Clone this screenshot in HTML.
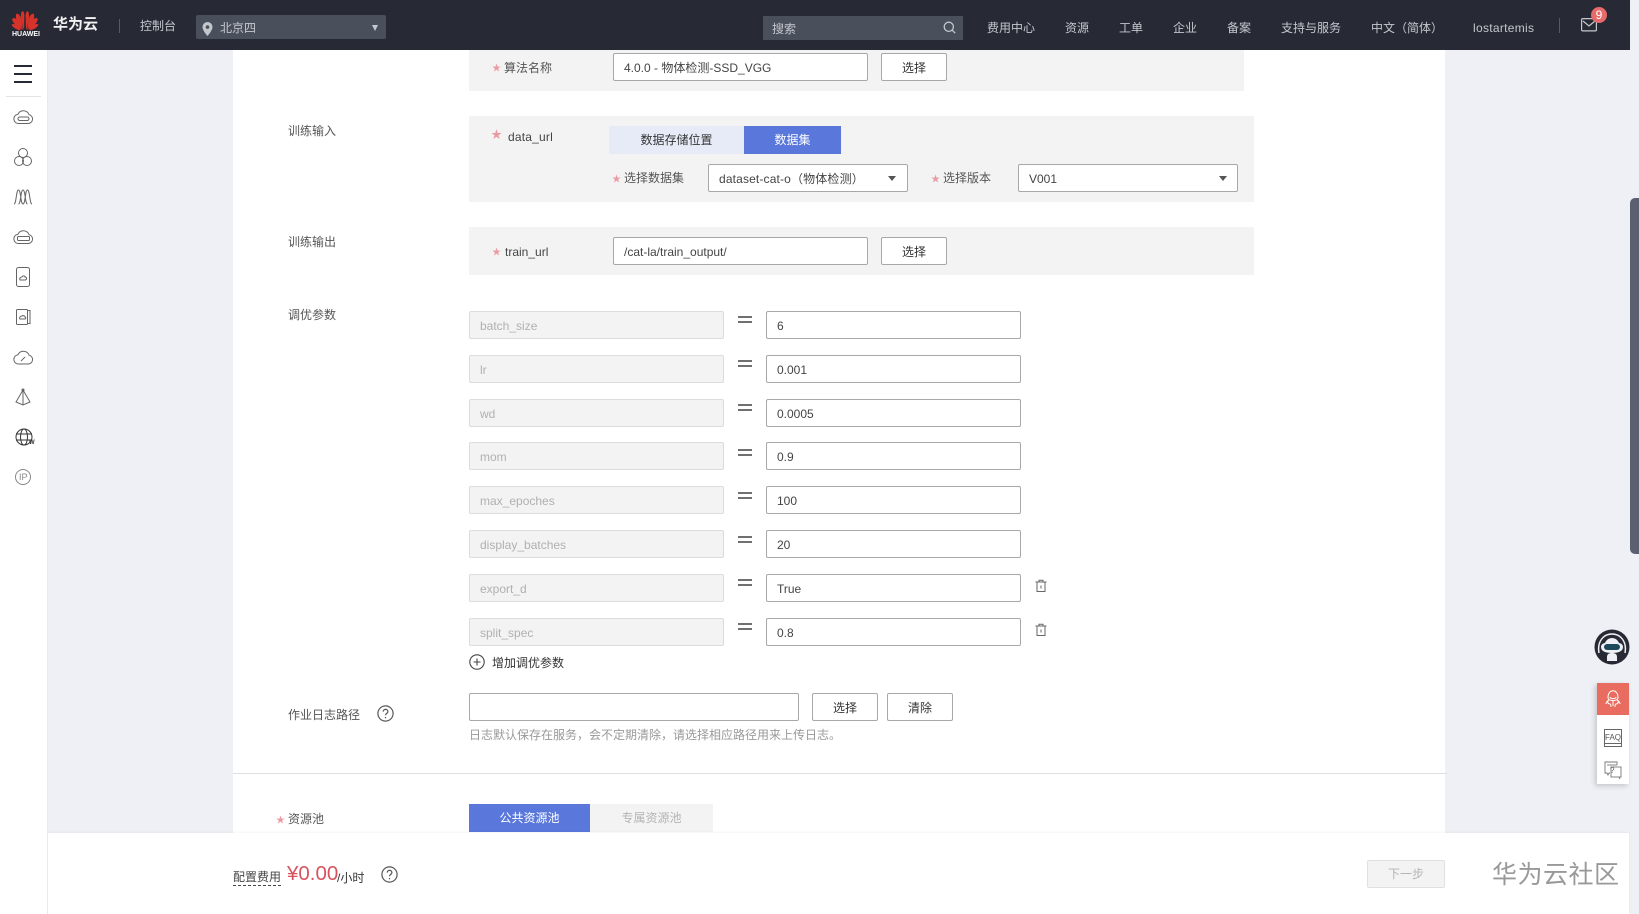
<!DOCTYPE html>
<html lang="zh-CN"><head><meta charset="utf-8"><title>华为云</title>
<style>
*{box-sizing:border-box}
html,body{margin:0;padding:0;width:1639px;height:914px;overflow:hidden;background:#eef0f5;font:12px/16px "Liberation Sans","Noto Sans CJK SC",sans-serif;color:#333}
.a{position:absolute}
.t{position:absolute;white-space:nowrap;line-height:16px}
.nav{color:#c4c7ce;top:20px}
.panel{position:absolute;background:#f3f3f3}
.inp{position:absolute;background:#fff;border:1px solid #a8a8a8;border-radius:2px;height:28px;padding:0 10px;line-height:29px;color:#444;white-space:nowrap}
.key{position:absolute;background:#f3f3f3;border:1px solid #dcdcdc;border-radius:2px;height:28px;padding:0 10px;line-height:29px;color:#b0b0b0;left:469px;width:255px}
.btn{position:absolute;background:#fff;border:1px solid #a8a8a8;border-radius:2px;height:28px;line-height:28px;text-align:center;color:#333}
.star{color:#ea9aa3;font-size:9px}
.lbl{color:#555}
.eq{position:absolute;left:738px;width:14px;height:7px;border-top:2px solid #707070;border-bottom:2px solid #707070}
.arrow{position:absolute;width:0;height:0;border-left:4px solid transparent;border-right:4px solid transparent;border-top:5px solid #555}
svg{position:absolute;overflow:visible}
</style></head><body>

<!-- content -->
<div class="a" style="left:233px;top:50px;width:1212px;height:783px;background:#fff"></div>

<!-- algorithm panel -->
<div class="panel" style="left:469px;top:50px;width:775px;height:41px"></div>
<div class="t" style="left:492px;top:59px"><span class="star">★</span></div>
<div class="t lbl" style="left:504px;top:60px">算法名称</div>
<div class="inp" style="left:613px;top:53px;width:255px">4.0.0 - 物体检测-SSD_VGG</div>
<div class="btn" style="left:881px;top:53px;width:66px">选择</div>

<!-- train input -->
<div class="t lbl" style="left:288px;top:123px">训练输入</div>
<div class="panel" style="left:469px;top:116px;width:785px;height:86px"></div>
<div class="t" style="left:491px;top:126px"><span class="star" style="font-size:11px">★</span></div>
<div class="t" style="left:508px;top:129px;color:#444;letter-spacing:.2px">data_url</div>
<div class="a" style="left:609px;top:126px;width:135px;height:28px;background:#e6ebf7;text-align:center;line-height:29px;color:#333">数据存储位置</div>
<div class="a" style="left:744px;top:126px;width:97px;height:28px;background:#5a78dc;text-align:center;line-height:29px;color:#fff">数据集</div>
<div class="t" style="left:612px;top:170px"><span class="star">★</span></div>
<div class="t lbl" style="left:624px;top:170px">选择数据集</div>
<div class="inp" style="left:708px;top:164px;width:200px;height:28px;letter-spacing:.15px">dataset-cat-o（物体检测）</div>
<div class="arrow" style="left:888px;top:176px"></div>
<div class="t" style="left:931px;top:170px"><span class="star">★</span></div>
<div class="t lbl" style="left:943px;top:170px">选择版本</div>
<div class="inp" style="left:1018px;top:164px;width:220px;height:28px">V001</div>
<div class="arrow" style="left:1219px;top:176px"></div>

<!-- train output -->
<div class="t lbl" style="left:288px;top:234px">训练输出</div>
<div class="panel" style="left:469px;top:227px;width:785px;height:48px"></div>
<div class="t" style="left:492px;top:243px"><span class="star">★</span></div>
<div class="t" style="left:505px;top:244px;color:#444">train_url</div>
<div class="inp" style="left:613px;top:237px;width:255px">/cat-la/train_output/</div>
<div class="btn" style="left:881px;top:237px;width:66px">选择</div>

<!-- tuning -->
<div class="t lbl" style="left:288px;top:307px">调优参数</div>

<div class="key" style="top:311px">batch_size</div><div class="eq" style="top:316px"></div><div class="inp" style="left:766px;top:311px;width:255px">6</div>
<div class="key" style="top:355px">lr</div><div class="eq" style="top:360px"></div><div class="inp" style="left:766px;top:355px;width:255px">0.001</div>
<div class="key" style="top:399px">wd</div><div class="eq" style="top:404px"></div><div class="inp" style="left:766px;top:399px;width:255px">0.0005</div>
<div class="key" style="top:442px">mom</div><div class="eq" style="top:449px"></div><div class="inp" style="left:766px;top:442px;width:255px">0.9</div>
<div class="key" style="top:486px">max_epoches</div><div class="eq" style="top:492px"></div><div class="inp" style="left:766px;top:486px;width:255px">100</div>
<div class="key" style="top:530px">display_batches</div><div class="eq" style="top:536px"></div><div class="inp" style="left:766px;top:530px;width:255px">20</div>
<div class="key" style="top:574px">export_d</div><div class="eq" style="top:579px"></div><div class="inp" style="left:766px;top:574px;width:255px">True</div>
<div class="key" style="top:618px">split_spec</div><div class="eq" style="top:623px"></div><div class="inp" style="left:766px;top:618px;width:255px">0.8</div>

<svg style="left:1034px;top:579px" width="14" height="14" viewBox="0 0 14 14" fill="none" stroke="#666" stroke-width="1"><path d="M1.500 3h11M5 3V1.200h4V3M3 3v9.500h8V3M7 6.500v3"/></svg>
<svg style="left:1034px;top:623px" width="14" height="14" viewBox="0 0 14 14" fill="none" stroke="#666" stroke-width="1"><path d="M1.500 3h11M5 3V1.200h4V3M3 3v9.500h8V3M7 6.500v3"/></svg>

<svg style="left:469px;top:654px" width="16" height="16" viewBox="0 0 16 16" fill="none" stroke="#444" stroke-width="1.100"><circle cx="8" cy="8" r="7.200"/><path d="M8 4.500v7M4.500 8h7"/></svg>
<div class="t" style="left:492px;top:655px;color:#333">增加调优参数</div>

<!-- log -->
<div class="t lbl" style="left:288px;top:707px">作业日志路径</div>
<svg style="left:377px;top:705px" width="17" height="17" viewBox="0 0 17 17" fill="none" stroke="#555" stroke-width="1.200"><circle cx="8.500" cy="8.500" r="7.600"/><path d="M6.200 6.600c0-3 4.700-3 4.700 0 0 1.800-2.400 1.800-2.400 3.700M8.500 12v1.200"/></svg>
<div class="inp" style="left:469px;top:693px;width:330px"></div>
<div class="btn" style="left:812px;top:693px;width:66px">选择</div>
<div class="btn" style="left:887px;top:693px;width:66px">清除</div>
<div class="t" style="left:469px;top:727px;color:#999">日志默认保存在服务，会不定期清除，请选择相应路径用来上传日志。</div>

<div class="a" style="left:233px;top:773px;width:1214px;height:1px;background:#dedfe2"></div>

<!-- resource -->
<div class="t" style="left:276px;top:811px"><span class="star">★</span></div>
<div class="t lbl" style="left:288px;top:811px">资源池</div>
<div class="a" style="left:469px;top:804px;width:121px;height:28px;background:#5a78dc;color:#fff;text-align:center;line-height:29px">公共资源池</div>
<div class="a" style="left:590px;top:804px;width:123px;height:28px;background:#f3f3f3;color:#b4b4b4;text-align:center;line-height:29px">专属资源池</div>

<!-- bottom bar -->
<div class="a" style="left:48px;top:833px;width:1581px;height:81px;background:#fff;box-shadow:0 -1px 2px rgba(0,0,0,.04)"></div>
<div class="t" style="left:233px;top:869px;color:#444;border-bottom:1px dashed #444;height:17px">配置费用</div>
<div class="t" style="left:287px;top:862px;font-size:20.500px;line-height:24px;color:#d7545e">¥0.00</div>
<div class="t" style="left:337px;top:870px;color:#333">/小时</div>
<svg style="left:381px;top:866px" width="17" height="17" viewBox="0 0 17 17" fill="none" stroke="#555" stroke-width="1.200"><circle cx="8.500" cy="8.500" r="7.600"/><path d="M6.200 6.600c0-3 4.700-3 4.700 0 0 1.800-2.400 1.800-2.400 3.700M8.500 12v1.200"/></svg>
<div class="a" style="left:1367px;top:860px;width:78px;height:28px;background:#f3f3f3;border:1px solid #e0e0e0;border-radius:2px;color:#b4b4b4;text-align:center;line-height:27px">下一步</div>
<div class="t" style="left:1492px;top:859px;font-size:25px;line-height:32px;color:#999;letter-spacing:.5px">华为云社区</div>

<!-- header -->
<div class="a" style="left:0;top:0;width:1630px;height:50px;background:#272a35"></div>
<svg style="left:11px;top:9px" width="28" height="22" viewBox="0 0 28 22">
<g fill="#d8332a"><path d="M13 21C11 15 9 8 10.500 3 12 1 13 3 13.400 6z"/><path d="M15 21c2-6 4-13 2.500-18C16 1 15 3 14.600 6z"/><path d="M12 21C8 16 4 11 5 5c2-1 4 1 5 4z"/><path d="M16 21c4-5 8-10 7-16-2-1-4 1-5 4z"/><path d="M11 21C7 18 2 15 1 10c2-2 5 0 6 2z"/><path d="M17 21c4-3 9-6 10-11-2-2-5 0-6 2z"/><path d="M10 21.500C6 21 2 19 .5 15.500 3 14 6 16 8 18z"/><path d="M18 21.500c4-.5 8-2.500 9.500-6-2.500-1.500-5.500.5-7.500 2.500z"/></g></svg>
<div class="t" style="left:12px;top:30px;font-size:7px;line-height:10px;color:#fff;font-weight:bold">HUAWEI</div>
<div class="t" style="left:53px;top:16px;font-size:15px;line-height:18px;color:#f2f2f2;font-weight:bold">华为云</div>
<div class="a" style="left:119px;top:19px;width:1px;height:14px;background:#555a66"></div>
<div class="t" style="left:140px;top:18px;color:#c4c7ce">控制台</div>
<div class="a" style="left:196px;top:15px;width:190px;height:24px;background:#4a4f5c;border-radius:2px"></div>
<svg style="left:202px;top:22px" width="11" height="14" viewBox="0 0 11 14"><path fill="#c4c7ce" fill-rule="evenodd" d="M5.500 0a5 5 0 0 1 5 5c0 3.500-5 9-5 9s-5-5.500-5-9a5 5 0 0 1 5-5zm0 3.300a1.800 1.800 0 1 0 0 3.600 1.800 1.800 0 0 0 0-3.600z"/></svg>
<div class="t" style="left:220px;top:20px;color:#c4c7ce">北京四</div>
<div class="a" style="left:372px;top:25px;width:0;height:0;border-left:3.500px solid transparent;border-right:3.500px solid transparent;border-top:6px solid #c4c7ce"></div>

<div class="a" style="left:763px;top:16px;width:200px;height:24px;background:#4a4f5c;border-radius:1px"></div>
<div class="t" style="left:772px;top:21px;color:#c4c7ce">搜索</div>
<svg style="left:943px;top:21px" width="13" height="13" viewBox="0 0 13 13" fill="none" stroke="#c4c7ce" stroke-width="1.300"><circle cx="5.800" cy="5.800" r="4.600"/><path d="M9.200 9.200l3 3"/></svg>
<div class="t nav" style="left:987px">费用中心</div>
<div class="t nav" style="left:1065px">资源</div>
<div class="t nav" style="left:1119px">工单</div>
<div class="t nav" style="left:1173px">企业</div>
<div class="t nav" style="left:1227px">备案</div>
<div class="t nav" style="left:1281px">支持与服务</div>
<div class="t nav" style="left:1371px">中文（简体）</div>
<div class="t nav" style="left:1473px;letter-spacing:.3px">lostartemis</div>
<div class="a" style="left:1559px;top:18px;width:1px;height:15px;background:#555a66"></div>
<svg style="left:1581px;top:18px" width="16" height="14" viewBox="0 0 16 14" fill="none" stroke="#c4c7ce" stroke-width="1.200"><rect x=".6" y=".6" width="14.800" height="12.300" rx="1"/><path d="M2 3l6 5 6-5"/></svg>
<div class="a" style="left:1591px;top:7px;width:16px;height:16px;border-radius:50%;background:#e86a6a;color:#fff;text-align:center;line-height:16px;font-size:12px">9</div>

<!-- sidebar -->
<div class="a" style="left:0;top:50px;width:48px;height:864px;background:#fff;border-right:1px solid #e8e9ec"></div>
<div class="a" style="left:14px;top:65px;width:18px;height:2px;background:#272a35"></div>
<div class="a" style="left:14px;top:73px;width:18px;height:2px;background:#272a35"></div>
<div class="a" style="left:14px;top:81px;width:18px;height:2px;background:#272a35"></div>
<div class="a" style="left:6px;top:96px;width:35px;height:1px;background:#e3e4e7"></div>

<svg style="left:0;top:0" width="48" height="500" fill="none" stroke="#666" stroke-width="1">
<path d="M19 123.500h9a4.500 4.500 0 0 0 1-8.900 6 6 0 0 0-11-.4 4.500 4.500 0 0 0 1 9.300z"/><rect x="18" y="117" width="11" height="3.500" rx="1.700"/>
<circle cx="23" cy="153" r="4.500"/><circle cx="19" cy="161" r="4.500"/><circle cx="27" cy="161" r="4.500"/>
<path d="M14 204c2.500 0 2-14 4.500-14s2 14 4.500 14M18.500 204c2.500 0 2-14 4.500-14s2 14 4.500 14M23 204c2.500 0 2-14 4.500-14s2 14 4.500 14"/>
<path d="M19 243.500h9a4.500 4.500 0 0 0 1-8.900 6 6 0 0 0-11-.4 4.500 4.500 0 0 0 1 9.300z"/><rect x="17.500" y="236.500" width="12" height="4" rx="1"/>
<rect x="16.500" y="267.500" width="13" height="19" rx="2"/><path d="M20 280c-1-2 1-3 2-3 1-2 3-1 3 0 2 0 2 3 0 3z"/>
<rect x="16.500" y="309.500" width="11" height="15" rx="1"/><path d="M27.500 310.500h2.500v13h-2.500"/><path d="M20 319c-1-1 0-3 2-3 1-1 3 0 3 1 1 0 1 2 0 2z"/>
<path d="M19 364h9a4.500 4.500 0 0 0 1-8.900 6 6 0 0 0-11-.4 4.500 4.500 0 0 0 1 9.300z"/><path d="M21 361l4-4"/>
<path d="M23 390l-7 12 7 3 7-3zM23 390v15"/><circle cx="23" cy="390" r="1" fill="#555"/>
<circle cx="24" cy="437" r="8" stroke="#333"/><ellipse cx="24" cy="437" rx="3.500" ry="8" stroke="#333"/><path d="M16 434h16M16 440h16" stroke="#333"/>
<circle cx="23" cy="477" r="7.500" stroke="#888"/>
</svg>
<div class="t" style="left:29px;top:440px;font-size:6px;line-height:7px;font-weight:bold;color:#333">W</div>
<div class="t" style="left:19px;top:472px;font-size:9px;line-height:10px;color:#888">IP</div>

<!-- robot + float panel -->
<svg style="left:1594px;top:629px" width="36" height="36" viewBox="0 0 36 36">
<circle cx="18" cy="18" r="17.500" fill="#272a35"/>
<path d="M5 24C3 13 9 5 18 5s15 8 13 19" fill="none" stroke="#eef0f5" stroke-width="1.500"/>
<path d="M7 18c0-3 3-4 4-4 1-3 4-5 7-5s6 2 7 5c1 0 4 1 4 4 0 4-4 6-11 6S7 22 7 18z" fill="#eef0f5"/>
<rect x="10" y="15" width="16" height="6" rx="3" fill="#1d4a5a"/>
<path d="M13 28c0-3 2-4 5-4s5 1 5 4v4h-10z" fill="#eef0f5"/>
</svg>
<div class="a" style="left:1597px;top:683px;width:32px;height:101px;background:#fff;box-shadow:-2px 2px 5px rgba(0,0,0,.18)"></div>
<div class="a" style="left:1597px;top:683px;width:32px;height:32px;background:#e86d60"></div>
<svg style="left:1605px;top:690px" width="16" height="18" viewBox="0 0 16 18" fill="none" stroke="#fff" stroke-width="1"><path d="M3 7.500c0-9 10-9 10 0 0 2-2 3-5 3S3 9.500 3 7.500zM5 7c0 2 6 2 6 0"/><path d="M4 10c-2 1-3 3-3 4M3 11c-1 2 1 3 2 3s1 2 1 3M12 10c2 1 3 3 3 4M13 11c1 2-1 3-2 3s-1 2-1 3M8 11v5"/></svg>
<svg style="left:1604px;top:729px" width="18" height="18" viewBox="0 0 18 18" fill="none" stroke="#666"><rect x=".5" y=".5" width="17" height="17"/><path d="M1 14.500h16"/></svg>
<div class="t" style="left:1605px;top:732px;font-size:8px;line-height:11px;color:#555">FAQ</div>
<svg style="left:1604px;top:761px" width="18" height="18" viewBox="0 0 18 18" fill="none" stroke="#777" stroke-width=".9"><path d="M13 4V1H1v11h2l1 2 1-2h1"/><path d="M3 4h10"/><rect x="7" y="6" width="10" height="10"/><path d="M15 16l1 2"/></svg>
<div class="t" style="left:1610px;top:766px;font-size:8px;line-height:10px;color:#666">?</div>

<!-- scrollbar -->
<div class="a" style="left:1630px;top:198px;width:9px;height:356px;background:#5a6070;border-radius:5px 0 0 5px"></div>
</body></html>
